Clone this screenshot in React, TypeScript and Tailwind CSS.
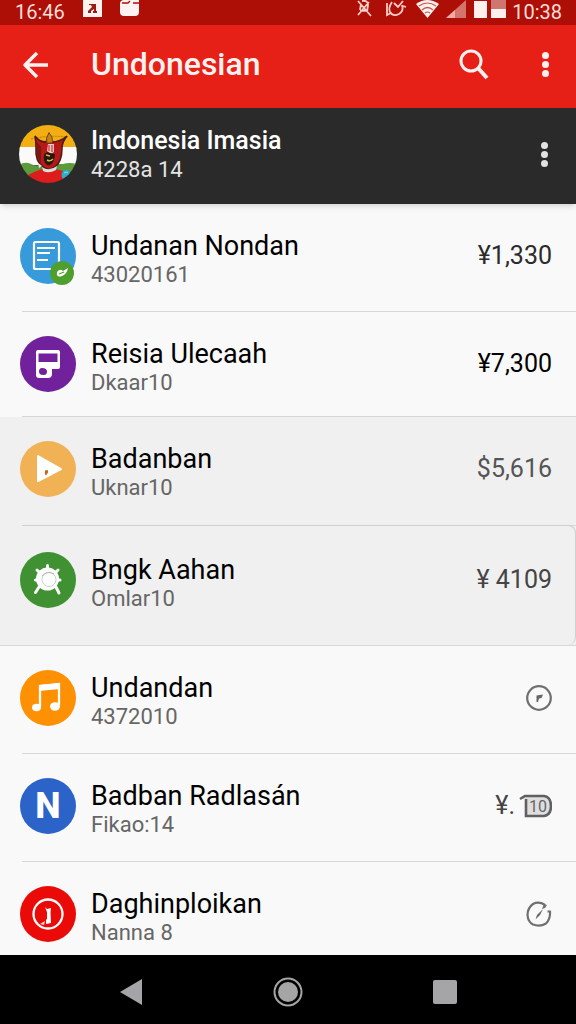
import type { ReactNode } from 'react';
import clsx from 'clsx';

interface Item {
  id: number;
  title: string;
  subtitle: string;
  color: string;
  icon: ReactNode;
  trailing: ReactNode;
  rowClass: string;
  amountClass?: string;
  card?: boolean;
}

function EmblemAvatar() {
  return (
    <svg viewBox="0 0 58 58" className="size-[58px] shrink-0" aria-hidden="true">
      <defs>
        <clipPath id="emblem-clip">
          <circle cx="29" cy="29" r="29" />
        </clipPath>
      </defs>
      <g clipPath="url(#emblem-clip)">
        <rect width="58" height="24" fill="#f2ae12" />
        <rect y="22" width="58" height="18" fill="#fafafa" />
        <path d="M0 40 Q6 36 12 39 T26 39 H44 Q50 37 58 39 V52 H0Z" fill="#5d9a3b" />
        <path d="M9 50 Q17 46 23 44 H36 Q45 46 50 48 L58 50 V58 H0Z" fill="#dd1d1b" />
        <path d="M12 14 Q29 10 49 12" fill="none" stroke="#b57a14" strokeWidth="1" strokeDasharray="2 1" />
        <path d="M16 11 Q20 17 27 17 L30 9 L33 17 Q41 17 48 11 Q43 17 43 23 Q43 37 36 42 L30 45 L24 42 Q16 36 17 23 Q17 16 16 11Z" fill="#b81818" stroke="#4b1d16" strokeWidth="1.6" />
        <path d="M30 8 Q26 13 28 18 H33 Q35 13 30 8Z" fill="#c28413" stroke="#6b3a10" strokeWidth=".8" />
        <path d="M17 15 Q20 20 22 22 V38 Q17 32 17 24Z" fill="#7d1714" />
        <path d="M29 19 H35 V27 L32 29 L28 26Z" fill="#f4c5c5" />
        <path d="M30 20V26M33 20V27" stroke="#c01818" strokeWidth="1" />
        <path d="M25 30 Q27 26 31 28 L36 29 L35 35 Q33 41 28 40 Q24 37 25 30Z" fill="#25160e" />
        <path d="M27 30 L31 31 M28 35 Q31 37 34 34" stroke="#d9b53c" strokeWidth="1.6" fill="none" />
        <path d="M23 42 Q30 47 38 41 L37 45 Q30 49 24 46Z" fill="#ddd" />
        <path d="M19 38 L23 41 L20 43Z" fill="#e8e8e8" />
        <ellipse cx="47" cy="50" rx="4.5" ry="5" fill="#27afd2" />
        <path d="M45 48 Q47 46 49 48" stroke="#8de0f2" fill="none" />
      </g>
    </svg>
  );
}

function DocumentIcon() {
  return (
    <svg viewBox="0 0 56 56" className="size-full" aria-hidden="true">
      <rect x="14" y="14" width="25" height="27" rx="1.5" fill="none" stroke="#fff" strokeWidth="2.2" />
      <path d="M17 20H35M17 25H30M17 32H28" stroke="#fff" strokeWidth="1.8" />
    </svg>
  );
}

function TerminalIcon() {
  return (
    <svg viewBox="0 0 56 56" className="size-full" aria-hidden="true">
      <path
        fillRule="evenodd"
        fill="#fff"
        d="M18 14H38Q40 14 40 16V31Q40 33 38 33H32V38Q32 42 28 42H19Q16 42 16 39V16Q16 14 18 14ZM18.500 17.500V26H37.500V17.500ZM22 32Q19 32 19 35.500Q19 39 23.500 39Q27 39 27 35.500Q27 32 22 32Z"
      />
    </svg>
  );
}

function PlayIcon() {
  return (
    <svg viewBox="0 0 56 56" className="size-full" aria-hidden="true">
      <path d="M18 15L41 28L18 40Z" fill="#fff" stroke="#fff" strokeWidth="2" strokeLinejoin="round" />
      <path d="M25 29.500Q29 28 28 31.500L26 34.500Q24.500 34 25 29.500Z" fill="#bd6a1d" />
    </svg>
  );
}

function GearIcon() {
  return (
    <svg viewBox="0 0 56 56" className="size-full" aria-hidden="true">
      <circle cx="27.500" cy="27" r="11.500" fill="#fff" />
      <g stroke="#fff" strokeWidth="3" strokeLinecap="round">
        <path d="M27.500 16V13.500M19 20L17 18M36 20L38 18M17 28H15.500M38 28H40" />
        <path d="M19 35L15.500 40.500M36 35L39 41" />
      </g>
      <circle cx="29" cy="27.500" r="7" fill="none" stroke="#c6d3c4" strokeWidth="1" />
      <path d="M22 24Q27 18 34 22" fill="none" stroke="#a9bca5" strokeWidth="1" />
    </svg>
  );
}

function NotesIcon() {
  return (
    <svg viewBox="0 0 56 56" className="size-full" aria-hidden="true">
      <path d="M20 37V16L39 14V35" fill="none" stroke="#fff" strokeWidth="2.300" />
      <path d="M19 15L40 13V19L19 21Z" fill="#fff" />
      <ellipse cx="16.500" cy="37.500" rx="4.500" ry="3.700" fill="#fff" />
      <ellipse cx="35" cy="36.500" rx="5" ry="4.200" fill="#fff" />
    </svg>
  );
}

function PinCircleIcon() {
  return (
    <svg viewBox="0 0 56 56" className="size-full" aria-hidden="true">
      <circle cx="28" cy="28" r="14.500" fill="none" stroke="#fff" strokeWidth="2.300" />
      <path d="M25 21L27 23L31 22L30.500 26L31 37L26 38L26 34L27 33V26Z" fill="#fff" />
      <path d="M20 38L25 35L24 39Z" fill="#ffd7d3" />
    </svg>
  );
}

function LeafBadge() {
  return (
    <span className="absolute right-[2px] -bottom-px size-6 rounded-full bg-[#4f9f2e]">
      <svg viewBox="0 0 24 24" className="size-full" aria-hidden="true">
        <path d="M7 11Q10 7 13 10L18 7Q17 13 12 15Q6 17 7 11Z" fill="#fff" />
        <path d="M9 13L14 11" stroke="#4f9f2e" strokeWidth="1.300" />
      </svg>
    </span>
  );
}

function CompassIcon() {
  return (
    <svg viewBox="0 0 26 26" className="size-[26px]" aria-hidden="true">
      <circle cx="13" cy="13" r="11.800" fill="none" stroke="#707070" strokeWidth="2.200" />
      <path d="M10.500 10.500L17 9.500L15.500 13L13 13.500L12 17L10.500 17Z" fill="#666" />
    </svg>
  );
}

function GaugeIcon() {
  return (
    <svg viewBox="0 0 26 26" className="size-[26px]" aria-hidden="true">
      <path d="M19 4Q13 0 7 3Q1.500 7 1.500 14Q2 21 7 23.500Q14 26 20 22.500Q24.500 18 24 10.500H21.500" fill="none" stroke="#707070" strokeWidth="2.200" />
      <path d="M18 3L21 4L19 7L16 8Z" fill="#707070" />
      <path d="M9.500 18.500L11 14L17 8L14 14Z" fill="#666" />
    </svg>
  );
}

function NoteCount() {
  return (
    <span className="flex items-center gap-1">
      ¥.
      <svg viewBox="0 0 33 24" className="h-6 w-[33px]">
        <path d="M1 5L6 2H25Q32 3 32 12Q32 21 25 22H7V5" fill="#dedede" stroke="#606060" strokeWidth="2.600" />
        <text x="10" y="18" fontSize="16" fill="#666">10</text>
      </svg>
    </span>
  );
}

const items: Item[] = [
  { id: 1, title: 'Undanan Nondan', subtitle: '43020161', color: 'bg-[#369adb]', icon: <><DocumentIcon /><LeafBadge /></>, trailing: '¥1,330', amountClass: 'text-[#2b2b2b]', rowClass: 'pt-6 pb-[23px]' },
  { id: 2, title: 'Reisia Ulecaah', subtitle: 'Dkaar10', color: 'bg-[#70219b]', icon: <TerminalIcon />, trailing: '¥7,300', amountClass: 'text-black', rowClass: 'pt-6 pb-5' },
  { id: 3, title: 'Badanban', subtitle: 'Uknar10', color: 'bg-[#f0b255]', icon: <PlayIcon />, trailing: '$5,616', amountClass: 'text-[#555]', rowClass: 'pt-6 pb-6' },
  { id: 4, title: 'Bngk Aahan', subtitle: 'Omlar10', color: 'bg-[#3f9131]', icon: <GearIcon />, trailing: '¥ 4109', amountClass: 'text-[#444]', rowClass: 'pt-[26px] pb-[33px]', card: true },
  { id: 5, title: 'Undandan', subtitle: '4372010', color: 'bg-[#fd9003]', icon: <NotesIcon />, trailing: <CompassIcon />, rowClass: 'pt-6 pb-[23px]' },
  { id: 6, title: 'Badban Radlasán', subtitle: 'Fikao:14', color: 'bg-[#2b63c9]', icon: <span className="text-4xl font-extrabold text-white">N</span>, trailing: <NoteCount />, amountClass: 'text-[#444]', rowClass: 'pt-6 pb-[23px]' },
  { id: 7, title: 'Daghinploikan', subtitle: 'Nanna 8', color: 'bg-[#ea0b08]', icon: <PinCircleIcon />, trailing: <GaugeIcon />, rowClass: 'pt-6 pb-1' },
];

function MoreButton({ className }: { className?: string }) {
  return (
    <button type="button" aria-label="More" className={clsx('flex w-4 flex-col items-center gap-[2px]', className)}>
      <span className="size-[7px] rounded-full bg-current" />
      <span className="size-[7px] rounded-full bg-current" />
      <span className="size-[7px] rounded-full bg-current" />
    </button>
  );
}

function StatusBar() {
  return (
    <div className="flex h-[25px] shrink-0 items-start justify-between bg-[#ad0e05] pr-[14px] pl-[15px] text-[20px] leading-[24px] text-[#ffdeda]">
      <div className="flex items-start">
        <span>16:46</span>
        <svg viewBox="0 0 60 20" className="ml-4 h-5 w-[60px]" aria-hidden="true">
          <rect x="2" y="0" width="19" height="17" fill="#fff3f1" />
          <path d="M8 4H15V11H16V13H12V11H13V9L10 11V13H7V11L11 7L10 5H8Z" fill="#9c1b14" />
          <path d="M39 4Q39 0 43 0H58V12Q58 16 54 16H43Q39 16 39 12Z" fill="#fff3f1" />
          <path d="M41 3H47L49 1M52 3H58" stroke="#ad0e05" strokeWidth="1.300" fill="none" />
        </svg>
      </div>
      <div className="flex items-start gap-[6px]">
        <svg viewBox="0 0 150 20" className="h-5 w-[150px]" aria-hidden="true">
          <g fill="none" stroke="#ffcec8" strokeWidth="1.800">
            <path d="M2 1L15 16M2 15L13 2M6 1Q12 0 12 5L11 12M4 11L12 10M5 4L4 10" />
            <path d="M31 3V15L35 13M36 2Q32 8 34 12Q37 17 43 14Q48 11 46 5M38 3L42 7L47 1M47 6L50 7" />
          </g>
          <path d="M60 4Q71 -4 83 4L71.500 18Z" fill="#fff0ee" />
          <path d="M63 6Q71.500 0 80 6M66 10Q71.500 5 77 10M69 13Q71.500 11 74 13" fill="none" stroke="#c4554d" strokeWidth="1.200" />
          <path d="M110 0V18H90Z" fill="#d3756e" />
          <path d="M99 10V18H90Z" fill="#f0aaa4" />
          <rect x="118" y="1" width="13" height="17" fill="#fff0ee" />
          <rect x="135" y="0" width="15" height="10" fill="#cd7770" />
          <rect x="135" y="9" width="15" height="9" fill="#fff0ee" />
        </svg>
        <span>10:38</span>
      </div>
    </div>
  );
}

function ListRow({ item }: { item: Item }) {
  return (
    <li>
      <div className={clsx('relative flex items-start pr-6 pl-5', item.rowClass)}>
        {item.card && (
          <span className="pointer-events-none absolute -top-px right-0 bottom-0 left-[22px] rounded-r-lg border-t border-r border-[#cfd0d2]" />
        )}
        <div className={clsx('relative flex size-14 shrink-0 items-center justify-center rounded-full', item.color)}>
          {item.icon}
        </div>
        <div className="ml-[15px] min-w-0 flex-1 pt-[2px]">
          <h2 className="truncate text-[27px] leading-[32px] text-black">{item.title}</h2>
          <p className="truncate text-[22px] leading-[26px] text-[#666]">{item.subtitle}</p>
        </div>
        <div className={clsx('flex h-14 shrink-0 items-center text-[25px]', item.amountClass)}>{item.trailing}</div>
      </div>
      {item.id !== items.length && <div className={clsx('h-px bg-[#d6d7d8]', !item.card && 'ml-[22px]')} />}
    </li>
  );
}

export default function App() {
  return (
    <div className="flex h-screen flex-col overflow-hidden bg-[#f9f9f9] font-['Roboto',sans-serif]">
      <StatusBar />
      <header className="flex shrink-0 items-center bg-[#e62017] pt-[18px] pr-[23px] pb-[22px] pl-[22px] text-[#fff1ef]">
        <button type="button" aria-label="Back">
          <svg viewBox="0 0 28 28" className="size-7" fill="none" stroke="currentColor" strokeWidth="3.400" strokeLinejoin="round" aria-hidden="true">
            <path d="M26 14H4M15 2L3 14L15 26" />
          </svg>
        </button>
        <h1 className="ml-[41px] flex-1 text-[32px] leading-[43px] font-medium">Undonesian</h1>
        <button type="button" aria-label="Search">
          <svg viewBox="0 0 30 32" className="h-8 w-[30px]" fill="none" stroke="currentColor" aria-hidden="true">
            <circle cx="12" cy="12" r="10" strokeWidth="3" />
            <path d="M19 19L28 29" strokeWidth="4" />
          </svg>
        </button>
        <MoreButton className="ml-12" />
      </header>
      <section className="z-10 flex shrink-0 items-center bg-[#2a2a2a] pt-[17px] pr-6 pb-[21px] pl-[19px] shadow-md">
        <EmblemAvatar />
        <div className="ml-[14px] flex-1">
          <h2 className="text-[25px] leading-[32px] font-medium text-white">Indonesia Imasia</h2>
          <p className="text-[22px] leading-[26px] text-[#e4e4e4]">4228a 14</p>
        </div>
        <MoreButton className="text-[#e2e2e2]" />
      </section>
      <main className="min-h-0 flex-1 overflow-y-auto [scrollbar-width:none]">
        <ul>
          {/* rows 3 and 4 sit on the shaded band */}
          {items.slice(0, 2).map((item) => (
            <ListRow key={item.id} item={item} />
          ))}
        </ul>
        <ul className="bg-[#f0f0f0]">
          {items.slice(2, 4).map((item) => (
            <ListRow key={item.id} item={item} />
          ))}
        </ul>
        <ul>
          {items.slice(4).map((item) => (
            <ListRow key={item.id} item={item} />
          ))}
        </ul>
      </main>
      <nav className="flex h-[69px] shrink-0 items-center justify-around bg-black px-[54px] pt-1 text-[#a5a5a7]">
        <button type="button" aria-label="Back">
          <svg viewBox="0 0 24 28" className="h-7 w-6" fill="currentColor" aria-hidden="true">
            <path d="M23 1V27L1 14Z" />
          </svg>
        </button>
        <button type="button" aria-label="Home">
          <svg viewBox="0 0 30 30" className="size-[30px]" aria-hidden="true">
            <circle cx="15" cy="15" r="13.500" fill="none" stroke="currentColor" strokeWidth="2" />
            <circle cx="15" cy="15" r="10" fill="currentColor" />
          </svg>
        </button>
        <button type="button" aria-label="Recents">
          <span className="block size-6 rounded-xs bg-current" />
        </button>
      </nav>
    </div>
  );
}
